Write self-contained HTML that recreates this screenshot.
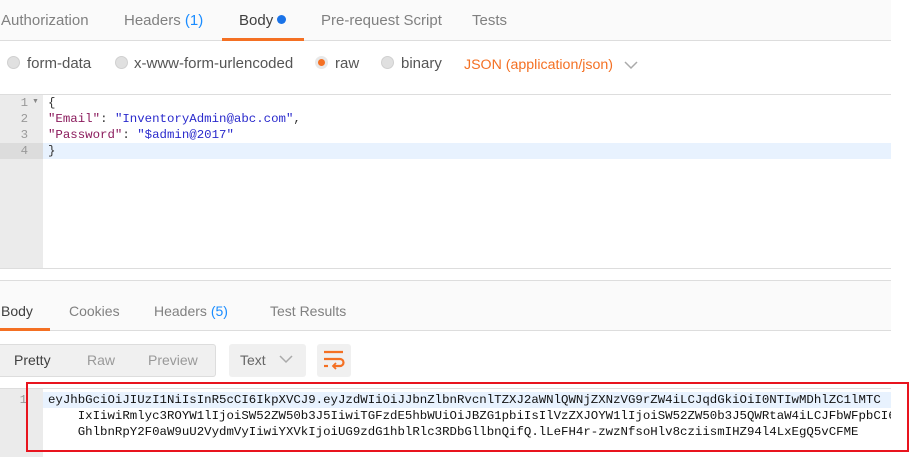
<!DOCTYPE html>
<html><head><style>
*{margin:0;padding:0;box-sizing:border-box}
body{width:923px;height:457px;background:#fff;position:relative;overflow:hidden;font-family:"Liberation Sans",sans-serif;font-size:15px;color:#808080}
.a{position:absolute;white-space:nowrap}
.mono{font-family:"Liberation Mono",monospace;font-size:12.4px;line-height:16px}
.radio{position:absolute;width:13px;height:13px;border-radius:50%;background:#e0e0e0;border:1px solid #d0d0d0;top:56px}
.rt{font-size:14px}
</style></head><body>
<!-- top tabs -->
<div class="a" style="left:0;top:0;width:891px;height:41px;background:#fafafa;border-bottom:1px solid #ddd"></div>
<div class="a" style="left:1px;top:12px">Authorization</div>
<div class="a" style="left:124px;top:12px">Headers <span style="color:#1a8cff">(1)</span></div>
<div class="a" style="left:239px;top:12px;color:#404040">Body <span style="display:inline-block;width:9px;height:9px;border-radius:50%;background:#1a73e8;vertical-align:1px"></span></div>
<div class="a" style="left:222px;top:38px;width:82px;height:3px;background:#f47023"></div>
<div class="a" style="left:321px;top:12px">Pre-request Script</div>
<div class="a" style="left:472px;top:12px">Tests</div>
<!-- radios -->
<div class="radio" style="left:7px"></div><div class="a" style="left:27px;top:55px;color:#555">form-data</div>
<div class="radio" style="left:115px"></div><div class="a" style="left:134px;top:55px;color:#555">x-www-form-urlencoded</div>
<div class="radio" style="left:315px;background:#f47023;border:3px solid #e8e8e8;width:13px;height:13px"></div><div class="a" style="left:335px;top:55px;color:#555">raw</div>
<div class="radio" style="left:381px"></div><div class="a" style="left:401px;top:55px;color:#555">binary</div>
<div class="a" style="left:464px;top:57px;color:#f47023;font-size:14.2px">JSON (application/json)</div>
<svg class="a" style="left:623px;top:60px" width="16" height="10"><path d="M2 2 L8 8 L14 2" fill="none" stroke="#aaa" stroke-width="1.5"/></svg>
<!-- editor -->
<div class="a" style="left:0;top:94px;width:891px;height:175px;border-top:1px solid #ddd;border-bottom:1px solid #ddd"></div>
<div class="a" style="left:0;top:95px;width:43px;height:173px;background:#ebebeb"></div>
<div class="a" style="left:0;top:143px;width:43px;height:16px;background:#dcdcdc"></div>
<div class="a" style="left:43px;top:143px;width:848px;height:16px;background:#e8f2fe"></div>
<div class="a mono" style="left:0;top:95px;width:28px;text-align:right;color:#999">1<br>2<br>3<br>4</div>
<div class="a" style="left:32px;top:98px;font-size:7px;color:#888">▼</div>
<div class="a mono" style="left:48px;top:95px;color:#333">{<br><span style="color:#8b1a5c">"Email"</span>: <span style="color:#2a2acc">"InventoryAdmin@abc.com"</span>,<br><span style="color:#8b1a5c">"Password"</span>: <span style="color:#2a2acc">"$admin@2017"</span><br>}</div>
<!-- response tabs -->
<div class="a" style="left:0;top:280px;width:891px;height:51px;background:#fafafa;border-top:1px solid #ddd;border-bottom:1px solid #ddd"></div>
<div class="a rt" style="left:1px;top:303px;color:#404040">Body</div>
<div class="a" style="left:0;top:328px;width:50px;height:3px;background:#f47023"></div>
<div class="a rt" style="left:69px;top:303px">Cookies</div>
<div class="a rt" style="left:154px;top:303px">Headers <span style="color:#1a8cff">(5)</span></div>
<div class="a rt" style="left:270px;top:303px">Test Results</div>
<!-- buttons -->
<div class="a" style="left:0;top:344px;width:216px;height:33px;background:#f0f0f0;border:1px solid #ddd;border-left:none;border-radius:0 3px 3px 0"></div>
<div class="a rt" style="left:14px;top:352px;color:#404040">Pretty</div>
<div class="a rt" style="left:87px;top:352px;color:#999">Raw</div>
<div class="a rt" style="left:148px;top:352px;color:#999">Preview</div>
<div class="a" style="left:229px;top:344px;width:77px;height:33px;background:#f0f0f0;border-radius:3px"></div>
<div class="a rt" style="left:240px;top:352px;color:#666">Text</div>
<svg class="a" style="left:279px;top:355px" width="14" height="9"><path d="M1 1 L7 7 L13 1" fill="none" stroke="#aaa" stroke-width="1.5"/></svg>
<div class="a" style="left:317px;top:344px;width:34px;height:33px;background:#f0f0f0;border-radius:3px"></div>
<svg class="a" style="left:323px;top:350px" width="22" height="20"><g fill="none" stroke="#f47023" stroke-width="2.2"><path d="M1 2H20"/><path d="M1 9H17a3 3 0 0 1 0 7H11"/><path d="M1 16H5"/><path d="M13 13L10 16L13 19" stroke-width="1.8"/></g></svg>
<!-- response editor -->
<div class="a" style="left:0;top:388px;width:891px;height:69px;border-top:1px solid #ddd"></div>
<div class="a" style="left:0;top:389px;width:43px;height:68px;background:#ebebeb"></div>
<div class="a" style="left:43px;top:392px;width:848px;height:16px;background:#e8f2fe"></div>
<div class="a mono" style="left:0;top:392px;width:27px;text-align:right;color:#999">1</div>
<div class="a mono" style="left:48px;top:392px;width:843px;overflow:hidden;color:#111">eyJhbGciOiJIUzI1NiIsInR5cCI6IkpXVCJ9.eyJzdWIiOiJJbnZlbnRvcnlTZXJ2aWNlQWNjZXNzVG9rZW4iLCJqdGkiOiI0NTIwMDhlZC1lMTC<br>&nbsp;&nbsp;&nbsp;&nbsp;IxIiwiRmlyc3ROYW1lIjoiSW52ZW50b3J5IiwiTGFzdE5hbWUiOiJBZG1pbiIsIlVzZXJOYW1lIjoiSW52ZW50b3J5QWRtaW4iLCJFbWFpbCI6<br>&nbsp;&nbsp;&nbsp;&nbsp;GhlbnRpY2F0aW9uU2VydmVyIiwiYXVkIjoiUG9zdG1hblRlc3RDbGllbnQifQ.lLeFH4r-zwzNfsoHlv8cziismIHZ94l4LxEgQ5vCFME</div>
<div class="a" style="left:26px;top:382px;width:883px;height:70px;border:2px solid #e8141e"></div>
</body></html>
